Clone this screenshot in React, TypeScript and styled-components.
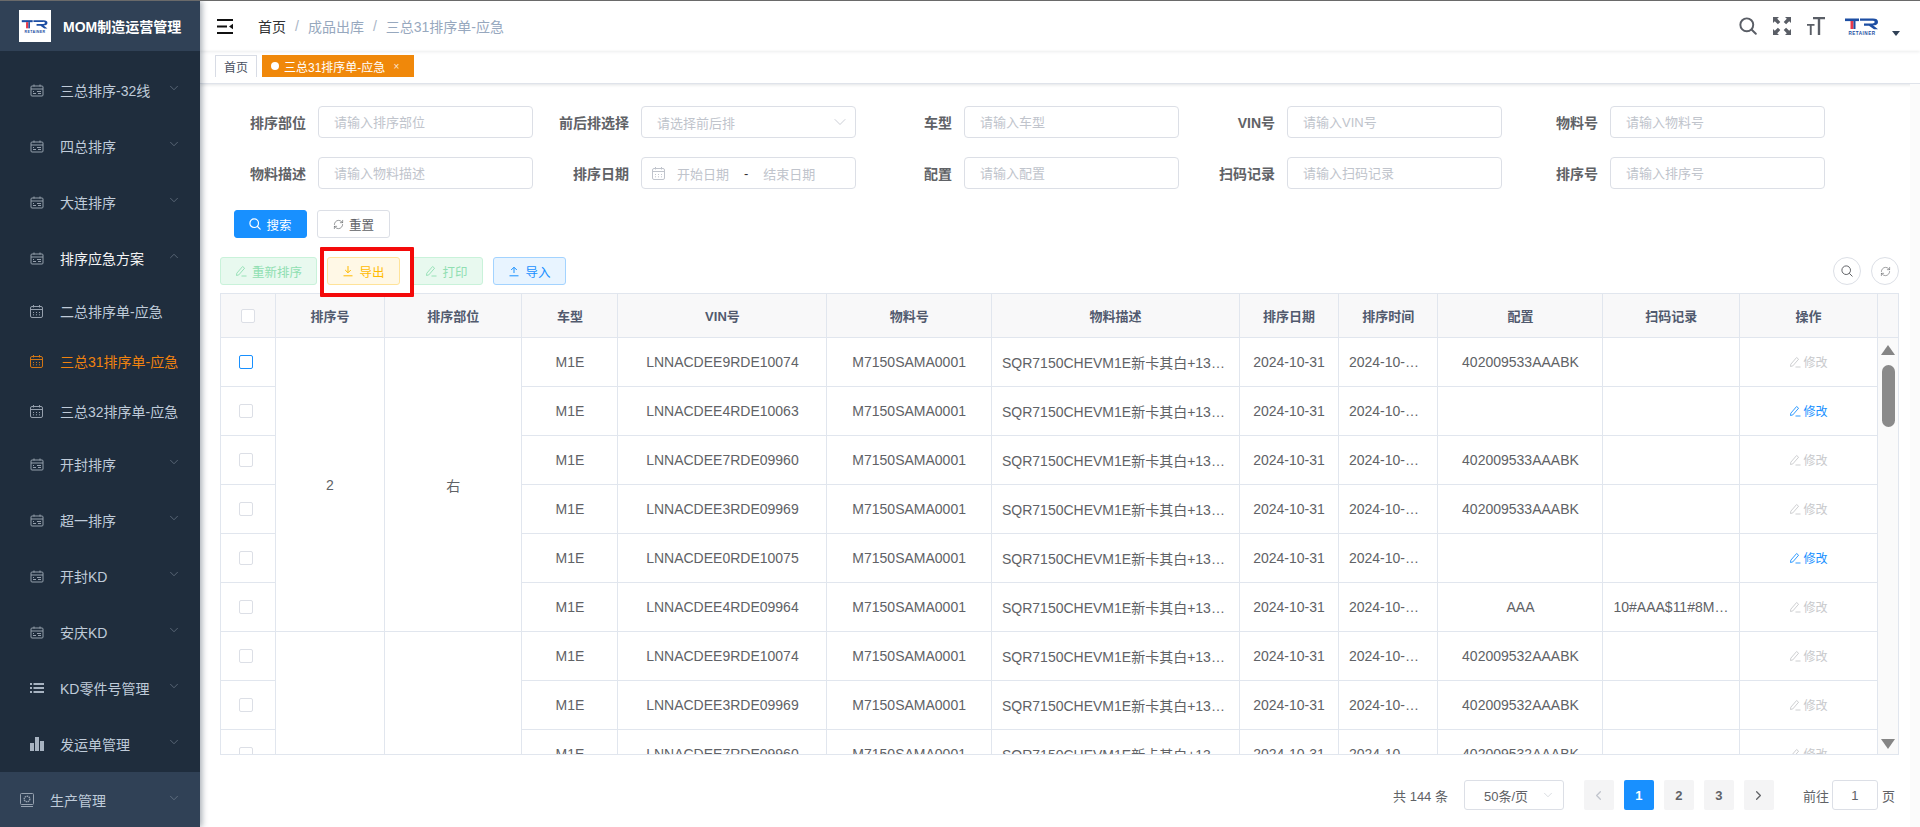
import React from 'react'
import styled, { createGlobalStyle } from 'styled-components'
import { ChevronDown, ChevronLeft, ChevronRight, ChevronUp, RefreshCw } from 'lucide-react'

const FONT = '"Liberation Sans", "Noto Sans CJK SC", sans-serif'

const GlobalStyle = createGlobalStyle`
  html, body {
    margin: 0;
    padding: 0;
    height: 100%;
    overflow: hidden;
    background: #fff;
    font-family: ${FONT};
  }
  * {
    box-sizing: border-box;
  }
`

const Shell = styled.div`
  display: flex;
  width: 1920px;
  height: 827px;
  border-top: 1px solid #6a6a6a;
  overflow: hidden;
`

/* sidebar */
const Sidebar = styled.aside`
  width: 200px;
  flex: none;
  display: flex;
  flex-direction: column;
  background: #1f2d3d;
  box-shadow: 2px 0 6px rgba(0, 21, 41, 0.35);
  position: relative;
  z-index: 2;
`

const Brand = styled.div`
  height: 50px;
  flex: none;
  display: flex;
  align-items: center;
  gap: 12px;
  padding: 0 0 0 19px;
  background: #304156;
  color: #fff;
  font-size: 14px;
  font-weight: 700;
  margin-bottom: 11px;
`

const BrandLogo = styled.span`
  width: 32px;
  height: 32px;
  background: #fff;
  display: flex;
  align-items: center;
  justify-content: center;
`

const MenuRow = styled.div<{ $height: number; $indent?: number; $active?: boolean; $open?: boolean; $filled?: boolean }>`
  height: ${p => p.$height}px;
  flex: none;
  display: flex;
  align-items: center;
  padding-left: ${p => p.$indent ?? 30}px;
  color: ${p => (p.$active ? '#f0820f' : p.$open ? '#f4f4f5' : '#bfcbd9')};
  background: ${p => (p.$filled ? '#304156' : 'transparent')};
  font-size: 14px;
  position: relative;
`

const MenuIcon = styled.span`
  width: 15px;
  margin-right: 15px;
  display: flex;
  opacity: 0.85;
`

const MenuArrow = styled.span`
  position: absolute;
  right: 19px;
  top: 50%;
  margin-top: -9px;
  display: flex;
  color: #7f8c9b;
`

/* main column */
const Main = styled.main`
  flex: 1;
  min-width: 0;
  display: flex;
  flex-direction: column;
`

const Navbar = styled.header`
  height: 50px;
  flex: none;
  display: flex;
  align-items: center;
  padding: 0 20px 0 17px;
  box-shadow: 0 1px 3px rgba(0, 21, 41, 0.08);
  position: relative;
  z-index: 1;
`

const Crumbs = styled.nav`
  display: flex;
  align-items: center;
  margin-left: 25px;
  font-size: 14px;
  color: #97a8be;
`

const CrumbHome = styled.span`
  color: #303133;
`

const CrumbSep = styled.span`
  margin: 0 9px;
  color: #a9b5c6;
`

const NavTools = styled.div`
  margin-left: auto;
  display: flex;
  align-items: center;
  gap: 16px;
  color: #5a5e66;
`

const AvatarBox = styled.div`
  display: flex;
  align-items: flex-end;
  margin-left: 3px;
`

const Caret = styled.span`
  width: 0;
  height: 0;
  margin: 0 0 -1px 12px;
  border-left: 4px solid transparent;
  border-right: 4px solid transparent;
  border-top: 5px solid #304156;
`

const TabsBar = styled.div`
  height: 33px;
  flex: none;
  display: flex;
  align-items: flex-start;
  gap: 5px;
  padding: 4px 0 0 15px;
  border-bottom: 1px solid #dfe3ea;
  box-shadow: 0 1px 3px rgba(0, 21, 41, 0.12);
`

const Tab = styled.div<{ $active?: boolean }>`
  height: 22px;
  display: flex;
  align-items: center;
  font-size: 12px;
  padding: ${p => (p.$active ? '0 15px 0 9px' : '0 8px')};
  color: ${p => (p.$active ? '#fff' : '#495060')};
  background: ${p => (p.$active ? '#f0880a' : '#fff')};
  border: ${p => (p.$active ? 'none' : '1px solid #d8dce5')};
  border-bottom: none;
`

const TabDot = styled.i`
  width: 8px;
  height: 8px;
  border-radius: 50%;
  background: #fff;
  margin-right: 5px;
`

const TabClose = styled.span`
  margin-left: 8px;
  font-size: 10px;
  opacity: 0.8;
`

const Body = styled.div`
  flex: 1;
  min-height: 0;
  display: flex;
`

const Content = styled.section`
  flex: 1;
  min-width: 0;
  padding: 22px 11px 0 20px;
`

const PageTrack = styled.div`
  width: 10px;
  flex: none;
  background: #fbfbfb;
`

/* search form */
const FormGrid = styled.div`
  display: grid;
  grid-template-columns: repeat(5, 313px);
  column-gap: 10px;
  row-gap: 19px;
`

const Field = styled.label`
  display: flex;
  align-items: center;
  height: 32px;
`

const FieldName = styled.span`
  width: 98px;
  padding-right: 12px;
  text-align: right;
  font-size: 14px;
  font-weight: 700;
  color: #606266;
`

const controlBox = `
  width: 215px;
  height: 32px;
  border: 1px solid #dcdfe6;
  border-radius: 4px;
  background: #fff;
  font-size: 13px;
  font-family: ${FONT};
`

const TextInput = styled.input`
  ${controlBox}
  padding: 0 15px;
  outline: none;
  &::placeholder {
    color: #c0c4cc;
    opacity: 1;
  }
`

const SelectBox = styled.div`
  ${controlBox}
  display: flex;
  align-items: center;
  justify-content: space-between;
  padding: 0 5px 0 15px;
  color: #c0c4cc;
`

const DateBox = styled.div`
  ${controlBox}
  display: flex;
  align-items: center;
  padding-left: 10px;
  color: #c0c4cc;
`

const DatePart = styled.span`
  margin-left: 12px;
`

const DateDash = styled.span`
  margin: 0 15px;
  color: #303133;
`

/* buttons */
type Tone = 'primary' | 'plain' | 'success' | 'warning' | 'info'

const tones: Record<Tone, string> = {
  primary: 'background:#1890ff;border-color:#1890ff;color:#fff;',
  plain: 'background:#fff;border-color:#dcdfe6;color:#606266;',
  success: 'background:#e8f9ef;border-color:#c9f2da;color:#90dfb2;',
  warning: 'background:#fff8e6;border-color:#ffe399;color:#ffba00;',
  info: 'background:#e8f4ff;border-color:#a3d3ff;color:#1890ff;'
}

const Btn = styled.button<{ $tone: Tone; $wide?: boolean }>`
  width: ${p => (p.$wide ? 97 : 73)}px;
  height: 28px;
  display: inline-flex;
  align-items: center;
  justify-content: center;
  gap: 5px;
  padding: 0;
  border: 1px solid;
  border-radius: 3px;
  font-size: 12.5px;
  font-family: ${FONT};
  ${p => tones[p.$tone]}
`

const SearchActions = styled.div`
  display: flex;
  gap: 10px;
  margin: 21px 0 19px 14px;
`

const Toolbar = styled.div`
  display: flex;
  align-items: center;
  gap: 10px;
  margin-bottom: 8px;
`

const Marked = styled.div`
  position: relative;
  display: flex;
`

const RedMark = styled.span`
  position: absolute;
  left: -7px;
  top: -10px;
  width: 94px;
  height: 50px;
  border: 4px solid #f40a0a;
  border-radius: 1px;
  pointer-events: none;
`

const RoundTools = styled.div`
  margin-left: auto;
  display: flex;
  gap: 10px;
`

const RoundBtn = styled.button`
  width: 28px;
  height: 28px;
  border-radius: 50%;
  border: 1px solid #dcdfe6;
  background: #fff;
  color: #606266;
  padding: 0;
  display: flex;
  align-items: center;
  justify-content: center;
`

/* table */
const TableBox = styled.div`
  width: 1679px;
  height: 462px;
  border: 1px solid #e1e6ee;
  display: flex;
  flex-direction: column;
  overflow: hidden;
`

const TableRow = styled.div`
  display: flex;
  flex: none;
`

const TableClip = styled.div`
  width: 1657px;
  height: 416px;
  overflow: hidden;
`

const Grid = styled.table`
  width: 1657px;
  table-layout: fixed;
  border-collapse: separate;
  border-spacing: 0;
`

const Th = styled.th`
  height: 44px;
  padding: 0 10px;
  background: #f8f8f9;
  border-right: 1px solid #e1e6ee;
  border-bottom: 1px solid #e1e6ee;
  color: #515a6e;
  font-size: 13px;
  font-weight: 700;
  text-align: center;
`

const Td = styled.td`
  height: 49px;
  padding: 0 10px;
  background: #fff;
  border-right: 1px solid #e1e6ee;
  border-bottom: 1px solid #e1e6ee;
  color: #606266;
  font-size: 14px;
  text-align: center;
  white-space: nowrap;
  overflow: hidden;
  text-overflow: ellipsis;
`

const TimeTd = styled(Td)`
  padding-right: 14px;
`

const HeadGutter = styled.div`
  width: 20px;
  background: #f8f8f9;
  border-bottom: 1px solid #e1e6ee;
`

const ScrollGutter = styled.div`
  width: 20px;
  height: 416px;
  background: #fafafa;
  position: relative;
`

const ArrowUp = styled.span`
  position: absolute;
  left: 3px;
  top: 7px;
  width: 0;
  height: 0;
  border-left: 7.5px solid transparent;
  border-right: 7.5px solid transparent;
  border-bottom: 10px solid #858585;
`

const ArrowDown = styled.span`
  position: absolute;
  left: 3px;
  bottom: 5px;
  width: 0;
  height: 0;
  border-left: 7.5px solid transparent;
  border-right: 7.5px solid transparent;
  border-top: 10px solid #858585;
`

const Thumb = styled.span`
  position: absolute;
  left: 4px;
  top: 27px;
  width: 13px;
  height: 62px;
  border-radius: 7px;
  background: #8a8a8a;
`

const Check = styled.span<{ $on?: boolean; $head?: boolean }>`
  display: block;
  width: 14px;
  height: 14px;
  margin: ${p => (p.$head ? '0 0 0 10px' : '0 0 0 8px')};
  border: 1px solid ${p => (p.$on ? '#1890ff' : '#dcdfe6')};
  border-radius: 2px;
  background: #fff;
`

const EditLink = styled.span<{ $enabled?: boolean }>`
  display: inline-flex;
  align-items: center;
  gap: 2px;
  font-size: 12px;
  color: ${p => (p.$enabled ? '#1890ff' : '#c8c9cc')};
`

/* pagination */
const Pager = styled.div`
  display: flex;
  align-items: center;
  height: 30px;
  margin-top: 25px;
  padding-right: 4px;
  justify-content: flex-end;
  font-size: 13px;
  color: #606266;
`

const PagerTotal = styled.span`
  margin-right: 16px;
`

const PagerSelect = styled.div`
  width: 100px;
  height: 30px;
  border: 1px solid #dcdfe6;
  border-radius: 3px;
  display: flex;
  align-items: center;
  justify-content: space-between;
  padding: 0 8px 0 19px;
  margin-right: 20px;
  color: #606266;
`

const PageBtn = styled.span<{ $current?: boolean; $muted?: boolean }>`
  width: 30px;
  height: 30px;
  margin-right: 10px;
  border-radius: 2px;
  display: flex;
  align-items: center;
  justify-content: center;
  font-weight: 700;
  background: ${p => (p.$current ? '#1890ff' : '#f4f4f5')};
  color: ${p => (p.$current ? '#fff' : p.$muted ? '#c0c4cc' : '#606266')};
`

const PagerJump = styled.span`
  margin-left: 19px;
`

const PagerInput = styled.input`
  width: 46px;
  height: 30px;
  margin: 0 4px 0 3px;
  border: 1px solid #dcdfe6;
  border-radius: 3px;
  text-align: center;
  font-size: 13px;
  font-family: ${FONT};
  color: #606266;
  outline: none;
`

/* drawings */
const TrLogo = ({ width }: { width: number }) => (
  <svg width={width} height={width * 0.5} viewBox="0 0 36 18">
    <rect x="1" y="1.5" width="14" height="2.6" fill="#1d4ea3" />
    <rect x="6.5" y="4" width="3" height="8" fill="#e8394a" />
    <rect x="9.5" y="4" width="2" height="8" fill="#1d4ea3" />
    <path d="M16 1.5h13q5 0 5 3.4t-5 3.4l5 4h-4l-5-3.6h-5V6.4h8.500q2.200 0 2.200-1.400t-2.200-1.300H16z" fill="#1d4ea3" />
    <text x="18" y="17.500" textAnchor="middle" fontSize="4.600" fontWeight="700" fontFamily={FONT} fill="#1d4ea3" letterSpacing="0.5">RETAINER</text>
  </svg>
)

const Hamburger = () => (
  <svg width="16" height="15" viewBox="0 0 16 15">
    <path d="M0 1h16M0 7.500h10M0 14h16" stroke="#111" strokeWidth="1.800" />
    <path d="M16 4.800v5.400l-4-2.700z" fill="#111" />
  </svg>
)

const SearchGlyph = ({ size = 12, sw = 1.2 }: { size?: number; sw?: number }) => (
  <svg width={size} height={size} viewBox="0 0 12 12" fill="none" stroke="currentColor" strokeWidth={sw}>
    <circle cx="5.200" cy="5.200" r="4.300" />
    <path d="M8.500 8.500l2.700 2.700" strokeLinecap="round" />
  </svg>
)

const FullscreenGlyph = () => (
  <svg width="18" height="18" viewBox="0 0 18 18" fill="currentColor">
    <path d="M0 0h6L4.200 1.800 7.300 4.900 4.900 7.300 1.800 4.200 0 6z" />
    <path d="M18 0v6l-1.800-1.800-3.100 3.100-2.400-2.400 3.100-3.100L12 0z" />
    <path d="M0 18v-6l1.800 1.800 3.100-3.100 2.400 2.400-3.100 3.100L6 18z" />
    <path d="M18 18h-6l1.800-1.800-3.100-3.100 2.400-2.400 3.100 3.100L18 12z" />
  </svg>
)

const TextSizeGlyph = () => (
  <svg width="18" height="18" viewBox="0 0 18 18" fill="currentColor">
    <path d="M6 0h12v2.300h-4.800V18h-2.400V2.300H6z" />
    <path d="M0 7h7.500v1.800H4.700V18H2.800V8.800H0z" />
  </svg>
)

const Pencil = () => (
  <svg width="12" height="12" viewBox="0 0 12 12" fill="none" stroke="currentColor" strokeWidth="0.900">
    <path d="M1.800 8.200 7.600 1.500l2 1.700-5.800 6.700-2.300.6z" strokeLinejoin="round" />
    <path d="M6.500 11h5" />
  </svg>
)

const DownGlyph = () => (
  <svg width="12" height="12" viewBox="0 0 12 12" fill="none" stroke="currentColor" strokeWidth="1">
    <path d="M6 1v6.500M3.200 5 6 7.800 8.800 5M1.500 10.800h9" />
  </svg>
)

const UpGlyph = () => (
  <svg width="12" height="12" viewBox="0 0 12 12" fill="none" stroke="currentColor" strokeWidth="1">
    <path d="M6 8V2.500M3.200 5 6 2.200 8.800 5M1.500 10.800h9" />
  </svg>
)

const GroupIcon = () => (
  <svg width="14" height="13" viewBox="0 0 14 13" fill="none" stroke="#aab4c0" strokeWidth="1">
    <rect x="1" y="2" width="12" height="10" rx="1" />
    <path d="M1 5h12M4 .5v2M10 .5v2M3 9.500h3M7 7.500h4M3 7.500h1M8 9.500h3" />
  </svg>
)

const DayIcon = ({ color = '#aab4c0' }: { color?: string }) => (
  <svg width="13" height="13" viewBox="0 0 13 13" fill="none" stroke={color} strokeWidth="1">
    <rect x="0.500" y="1.500" width="12" height="11" rx="1.500" />
    <path d="M0.500 4.500h12M3.500 0v2.500M9.500 0v2.500M3 7.500h1M6 7.500h1M9 7.500h1M3 9.800h1M6 9.800h1M9 9.800h1" />
  </svg>
)

const ListIcon = () => (
  <svg width="14" height="12" viewBox="0 0 14 12" fill="#bfcbd9">
    <rect x="0" y="1" width="2" height="2" />
    <rect x="0" y="5" width="2" height="2" />
    <rect x="0" y="9" width="2" height="2" />
    <rect x="3.500" y="1" width="10.500" height="2" />
    <rect x="3.500" y="5" width="10.500" height="2" />
    <rect x="3.500" y="9" width="10.500" height="2" />
  </svg>
)

const BarsIcon = () => (
  <svg width="14" height="14" viewBox="0 0 14 14" fill="#bfcbd9">
    <rect x="0" y="6" width="4" height="8" />
    <rect x="5" y="0" width="4" height="14" />
    <rect x="10" y="4" width="4" height="10" />
  </svg>
)

const PlantIcon = () => (
  <svg width="14" height="14" viewBox="0 0 14 14" fill="none" stroke="#aab4c0" strokeWidth="1">
    <rect x="0.500" y="0.500" width="13" height="11" rx="1" />
    <circle cx="7" cy="6" r="2.800" strokeDasharray="1.500 0.600" strokeWidth="1.400" />
    <path d="M1 13.500h12" />
  </svg>
)

/* data */
type MenuEntry = { label: string; icon: React.ReactNode; open?: boolean; active?: boolean }

const menuTop: MenuEntry[] = [
  { label: '三总排序-32线', icon: <GroupIcon /> },
  { label: '四总排序', icon: <GroupIcon /> },
  { label: '大连排序', icon: <GroupIcon /> },
  { label: '排序应急方案', icon: <GroupIcon />, open: true }
]

const menuSub: MenuEntry[] = [
  { label: '二总排序单-应急', icon: <DayIcon /> },
  { label: '三总31排序单-应急', icon: <DayIcon color="#f0820f" />, active: true },
  { label: '三总32排序单-应急', icon: <DayIcon /> }
]

const menuRest: MenuEntry[] = [
  { label: '开封排序', icon: <GroupIcon /> },
  { label: '超一排序', icon: <GroupIcon /> },
  { label: '开封KD', icon: <GroupIcon /> },
  { label: '安庆KD', icon: <GroupIcon /> },
  { label: 'KD零件号管理', icon: <ListIcon /> },
  { label: '发运单管理', icon: <BarsIcon /> }
]

const colWidths = [55, 109, 137.4, 96.1, 208.9, 164.6, 248, 99, 99.5, 165, 136.5, 138]
const headers = ['', '排序号', '排序部位', '车型', 'VIN号', '物料号', '物料描述', '排序日期', '排序时间', '配置', '扫码记录', '操作']

const DESC = 'SQR7150CHEVM1E新卡其白+13寸铝轮+真皮座椅'
const TIME = '2024-10-31 08:12:36'

type Row = { vin: string; config: string; scan?: string; editable?: boolean; focus?: boolean }

const groups: { seq: string; part: string; rows: Row[] }[] = [
  {
    seq: '2',
    part: '右',
    rows: [
      { vin: 'LNNACDEE9RDE10074', config: '402009533AAABK', focus: true },
      { vin: 'LNNACDEE4RDE10063', config: '', editable: true },
      { vin: 'LNNACDEE7RDE09960', config: '402009533AAABK' },
      { vin: 'LNNACDEE3RDE09969', config: '402009533AAABK' },
      { vin: 'LNNACDEE0RDE10075', config: '', editable: true },
      { vin: 'LNNACDEE4RDE09964', config: 'AAA', scan: '10#AAA$11#8MZ7150SAMA0001' }
    ]
  },
  {
    seq: '2',
    part: '左',
    rows: [
      { vin: 'LNNACDEE9RDE10074', config: '402009532AAABK' },
      { vin: 'LNNACDEE3RDE09969', config: '402009532AAABK' },
      { vin: 'LNNACDEE7RDE09960', config: '402009532AAABK' },
      { vin: 'LNNACDEE4RDE09964', config: '402009532AAABK' },
      { vin: 'LNNACDEE0RDE10075', config: '402009532AAABK' },
      { vin: 'LNNACDEE4RDE10063', config: '402009532AAABK' }
    ]
  }
]

const Cols = () => (
  <colgroup>
    {colWidths.map((w, i) => (
      <col key={i} style={{ width: w }} />
    ))}
  </colgroup>
)

const renderMenu = (items: MenuEntry[], height: number, arrows: boolean) =>
  items.map(item => (
    <MenuRow key={item.label} $height={height} $active={item.active} $open={item.open}>
      <MenuIcon>{item.icon}</MenuIcon>
      {item.label}
      {arrows && (
        <MenuArrow>
          {item.open ? <ChevronUp size={14} strokeWidth={1} /> : <ChevronDown size={14} strokeWidth={1} />}
        </MenuArrow>
      )}
    </MenuRow>
  ))

const fields: { label: string; placeholder: string }[] = [
  { label: '排序部位', placeholder: '请输入排序部位' },
  { label: '前后排选择', placeholder: '' },
  { label: '车型', placeholder: '请输入车型' },
  { label: 'VIN号', placeholder: '请输入VIN号' },
  { label: '物料号', placeholder: '请输入物料号' },
  { label: '物料描述', placeholder: '请输入物料描述' },
  { label: '排序日期', placeholder: '' },
  { label: '配置', placeholder: '请输入配置' },
  { label: '扫码记录', placeholder: '请输入扫码记录' },
  { label: '排序号', placeholder: '请输入排序号' }
]

export default function App() {
  return (
    <>
      <GlobalStyle />
      <Shell>
        <Sidebar>
          <Brand>
            <BrandLogo>
              <TrLogo width={28} />
            </BrandLogo>
            MOM制造运营管理
          </Brand>
          {renderMenu(menuTop, 56, true)}
          {renderMenu(menuSub, 50, false)}
          {renderMenu(menuRest, 56, true)}
          <MenuRow $height={56} $indent={20} $filled>
            <MenuIcon>
              <PlantIcon />
            </MenuIcon>
            生产管理
            <MenuArrow>
              <ChevronDown size={14} strokeWidth={1} />
            </MenuArrow>
          </MenuRow>
        </Sidebar>

        <Main>
          <Navbar>
            <Hamburger />
            <Crumbs>
              <CrumbHome>首页</CrumbHome>
              <CrumbSep>/</CrumbSep>
              成品出库
              <CrumbSep>/</CrumbSep>
              三总31排序单-应急
            </Crumbs>
            <NavTools>
              <SearchGlyph size={18} sw={1.3} />
              <FullscreenGlyph />
              <TextSizeGlyph />
              <AvatarBox>
                <TrLogo width={36} />
                <Caret />
              </AvatarBox>
            </NavTools>
          </Navbar>

          <TabsBar>
            <Tab>首页</Tab>
            <Tab $active>
              <TabDot />
              三总31排序单-应急
              <TabClose>×</TabClose>
            </Tab>
          </TabsBar>

          <Body>
            <Content>
              <FormGrid>
                {fields.map(f => (
                  <Field key={f.label}>
                    <FieldName>{f.label}</FieldName>
                    {f.label === '前后排选择' ? (
                      <SelectBox>
                        请选择前后排
                        <ChevronDown size={20} strokeWidth={1} />
                      </SelectBox>
                    ) : f.label === '排序日期' ? (
                      <DateBox>
                        <DayIcon color="#c0c4cc" />
                        <DatePart>开始日期</DatePart>
                        <DateDash>-</DateDash>
                        结束日期
                      </DateBox>
                    ) : (
                      <TextInput placeholder={f.placeholder} readOnly />
                    )}
                  </Field>
                ))}
              </FormGrid>

              <SearchActions>
                <Btn $tone="primary">
                  <SearchGlyph />
                  搜索
                </Btn>
                <Btn $tone="plain">
                  <RefreshCw size={11} strokeWidth={1.4} />
                  重置
                </Btn>
              </SearchActions>

              <Toolbar>
                <Btn $tone="success" $wide>
                  <Pencil />
                  重新排序
                </Btn>
                <Marked>
                  <Btn $tone="warning">
                    <DownGlyph />
                    导出
                  </Btn>
                  <RedMark />
                </Marked>
                <Btn $tone="success">
                  <Pencil />
                  打印
                </Btn>
                <Btn $tone="info">
                  <UpGlyph />
                  导入
                </Btn>
                <RoundTools>
                  <RoundBtn>
                    <SearchGlyph size={12} sw={1} />
                  </RoundBtn>
                  <RoundBtn>
                    <RefreshCw size={11} strokeWidth={1.3} />
                  </RoundBtn>
                </RoundTools>
              </Toolbar>

              <TableBox>
                <TableRow>
                  <Grid>
                    <Cols />
                    <thead>
                      <tr>
                        {headers.map((h, i) => (
                          <Th key={i}>{i === 0 ? <Check $head /> : h}</Th>
                        ))}
                      </tr>
                    </thead>
                  </Grid>
                  <HeadGutter />
                </TableRow>
                <TableRow>
                  <TableClip>
                    <Grid>
                      <Cols />
                      <tbody>
                        {groups.map(group =>
                          group.rows.map((row, i) => (
                            <tr key={group.part + i}>
                              <Td>
                                <Check $on={row.focus} />
                              </Td>
                              {i === 0 && <Td rowSpan={group.rows.length}>{group.seq}</Td>}
                              {i === 0 && <Td rowSpan={group.rows.length}>{group.part}</Td>}
                              <Td>M1E</Td>
                              <Td>{row.vin}</Td>
                              <Td>M7150SAMA0001</Td>
                              <Td>{DESC}</Td>
                              <Td>2024-10-31</Td>
                              <TimeTd>{TIME}</TimeTd>
                              <Td>{row.config}</Td>
                              <Td>{row.scan}</Td>
                              <Td>
                                <EditLink $enabled={row.editable}>
                                  <Pencil />
                                  修改
                                </EditLink>
                              </Td>
                            </tr>
                          ))
                        )}
                      </tbody>
                    </Grid>
                  </TableClip>
                  <ScrollGutter>
                    <ArrowUp />
                    <Thumb />
                    <ArrowDown />
                  </ScrollGutter>
                </TableRow>
              </TableBox>

              <Pager>
                <PagerTotal>共 144 条</PagerTotal>
                <PagerSelect>
                  50条/页
                  <ChevronDown size={14} strokeWidth={1} color="#c0c4cc" />
                </PagerSelect>
                <PageBtn $muted>
                  <ChevronLeft size={15} strokeWidth={2} />
                </PageBtn>
                <PageBtn $current>1</PageBtn>
                <PageBtn>2</PageBtn>
                <PageBtn>3</PageBtn>
                <PageBtn>
                  <ChevronRight size={15} strokeWidth={2} />
                </PageBtn>
                <PagerJump>前往</PagerJump>
                <PagerInput defaultValue="1" />
                页
              </Pager>
            </Content>
            <PageTrack />
          </Body>
        </Main>
      </Shell>
    </>
  )
}
